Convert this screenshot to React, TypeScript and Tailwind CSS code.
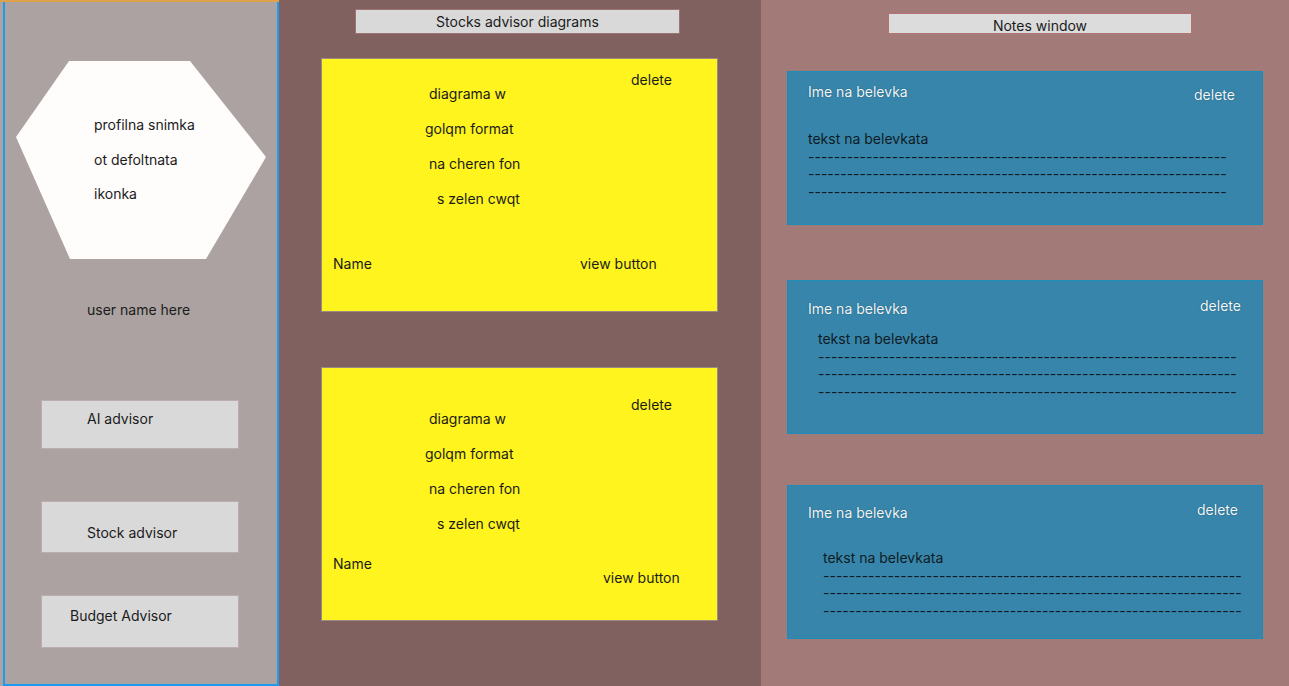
const DASHES = "-".repeat(65);

type Note = {
  box: string;
  title: string;
  del: string;
  body: string;
};

const notes: Note[] = [
  { box: "mt-[37px]", title: "mt-[10px] w-[386px]", del: "mt-[13px]", body: "mt-[25px] ml-[20px]" },
  { box: "mt-[55px]", title: "mt-[18px] w-[392px]", del: "mt-[15px]", body: "mt-[11px] ml-[30px]" },
  { box: "mt-[51px]", title: "mt-[17px] w-[389px]", del: "mt-[14px]", body: "mt-[26px] ml-[35px]" },
];

function SideButton({ label, box, text }: { label: string; box: string; text: string }) {
  return (
    <div className={`ml-[36px] w-[198px] border border-[#bcaeae] bg-[#d9d9d9] text-sm leading-5 text-[#1b1b1b] ${box}`}>
      <span className={`block ${text}`}>{label}</span>
    </div>
  );
}

function DiagramCard({
  top,
  deleteTop,
  linesTop,
  nameTop,
  viewTop,
  viewLeft,
}: {
  top: string;
  deleteTop: string;
  linesTop: string;
  nameTop: string;
  viewTop: string;
  viewLeft: string;
}) {
  const lines = [
    { t: "diagrama w", pl: "pl-[4px]" },
    { t: "golqm format", pl: "pl-0" },
    { t: "na cheren fon", pl: "pl-[4px]" },
    { t: "s zelen cwqt", pl: "pl-[12px]" },
  ];
  return (
    <div className={`ml-[42px] h-[254px] w-[397px] border border-[#9c8a82] bg-[#fff41d] text-sm text-[#1b1b1b] ${top}`}>
      <div className="flex items-start">
        <div className={`ml-[103px] w-[160px] ${linesTop}`}>
          {lines.map((l) => (
            <p key={l.t} className={`h-[35px] leading-[35px] ${l.pl}`}>
              {l.t}
            </p>
          ))}
        </div>
        <span className={`ml-[46px] leading-5 ${deleteTop}`}>delete</span>
      </div>
      <div className={`flex items-start ${nameTop}`}>
        <span className={`ml-[11px] leading-5 ${viewLeft}`}>Name</span>
        <span className={`leading-5 ${viewTop}`}>view button</span>
      </div>
    </div>
  );
}

export default function App() {
  return (
    <main className="flex h-[686px] w-full overflow-hidden font-['Inter',sans-serif]">
      <aside className="w-[279px] shrink-0 border-t-2 border-[#dca24c] bg-[#aba2a1] pl-[3px]">
        <div className="flex h-full flex-col border-x-2 border-b-2 border-[#1b9cf0]">
          <div className="ml-[11px] mt-[59px] h-[198px] w-[250px] bg-[#fffcfc] pl-[78px] pt-[46px] text-sm text-[#1b1b1b] [clip-path:polygon(0px_76px,53px_0px,174px_0px,250px_96px,190px_198px,54px_198px)]">
            <p className="h-[35px] leading-[35px]">profilna snimka</p>
            <p className="h-[35px] leading-[35px]">ot defoltnata</p>
            <p className="h-[34px] leading-[34px]">ikonka</p>
          </div>
          <p className="ml-[82px] mt-[41px] text-sm leading-5 text-[#1b1b1b]">user name here</p>
          <SideButton label="AI advisor" box="mt-[80px] h-[49px]" text="pl-[45px] pt-[8px]" />
          <SideButton label="Stock advisor" box="mt-[52px] h-[52px]" text="pl-[45px] pt-[21px]" />
          <SideButton label="Budget Advisor" box="mt-[42px] h-[53px]" text="pl-[28px] pt-[10px]" />
        </div>
      </aside>

      <section className="flex w-[482px] shrink-0 flex-col bg-[#816060]">
        <div className="ml-[76px] mt-[9px] flex h-[25px] w-[325px] items-center justify-center border border-[#9c7474] bg-[#d9d9d9] text-sm text-[#1b1b1b]">
          Stocks advisor diagrams
        </div>
        <DiagramCard
          top="mt-[24px]"
          deleteTop="mt-[11px]"
          linesTop="mt-[17px]"
          nameTop="mt-[38px]"
          viewLeft="w-[247px]"
          viewTop="mt-0"
        />
        <DiagramCard
          top="mt-[55px]"
          deleteTop="mt-[27px]"
          linesTop="mt-[33px]"
          nameTop="mt-[13px]"
          viewLeft="w-[270px]"
          viewTop="mt-[14px]"
        />
      </section>

      <section className="flex flex-1 flex-col bg-[#a27b79]">
        <div className="ml-[127px] mt-[13px] h-[21px] w-[304px] border border-[#b47474] bg-[#dcdcdc] pt-[2px] text-center text-sm leading-5 text-[#1b1b1b]">
          Notes window
        </div>
        {notes.map((n, i) => (
          <div key={i} className={`ml-[26px] h-[154px] w-[476px] border border-[#1c8cb8] bg-[#3785aa] text-sm ${n.box}`}>
            <div className="flex items-start">
              <span className={`ml-[20px] leading-5 text-[#f2f8fc] [text-shadow:0_0_1px_#0d3f57] ${n.title}`}>Ime na belevka</span>
              <span className={`leading-5 text-[#f2f8fc] [text-shadow:0_0_1px_#0d3f57] ${n.del}`}>delete</span>
            </div>
            <div className={`whitespace-nowrap leading-[17.5px] text-[#0f1b24] ${n.body}`}>
              <p>tekst na belevkata</p>
              <p>{DASHES}</p>
              <p>{DASHES}</p>
              <p>{DASHES}</p>
            </div>
          </div>
        ))}
      </section>
    </main>
  );
}
